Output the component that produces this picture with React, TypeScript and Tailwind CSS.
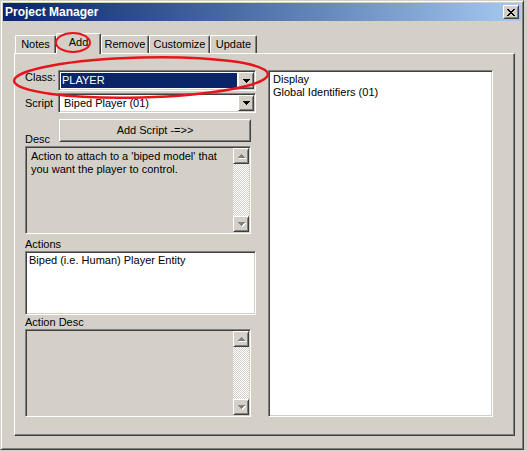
import React from 'react';

const sunken =
  'border border-t-[#808080] border-l-[#808080] border-b-white border-r-white shadow-[inset_1px_1px_0_#404040,inset_-1px_-1px_0_#d4d0c8]';
const raised =
  'border border-t-white border-l-white border-b-[#404040] border-r-[#404040] shadow-[inset_1px_1px_0_#d4d0c8,inset_-1px_-1px_0_#808080]';

function Arrow({ up, color = '#000' }: { up?: boolean; color?: string }) {
  const d = up
    ? 'M3 0h1v1h1v1h1v1h1v1h-7v-1h1v-1h1v-1h1z'
    : 'M0 0h7v1h-1v1h-1v1h-1v1h-1v-1h-1v-1h-1v-1h-1z';
  return (
    <svg width="8" height="5" viewBox="0 0 8 5" shapeRendering="crispEdges">
      {color === '#808080' && <path d={d} fill="#fff" transform="translate(1 1)" />}
      <path d={d} fill={color} />
    </svg>
  );
}

function DropButton() {
  return (
    <div className={`${raised} w-[16px] h-full flex items-center justify-center bg-[#d4d0c8] pl-[1px] pt-[1px]`}>
      <Arrow />
    </div>
  );
}

function Combo({ value, selected }: { value: string; selected?: boolean }) {
  return (
    <div className={`${sunken} bg-white flex-1 h-full flex p-[1px]`}>
      <div className="flex-1 flex p-[1px]">
        {selected ? (
          <div className="flex-1 bg-[#0a246a] text-white flex items-center pl-[1px]">{value}</div>
        ) : (
          <div className="flex-1 flex items-center pl-[3px]">{value}</div>
        )}
      </div>
      <DropButton />
    </div>
  );
}

function ScrollBar() {
  return (
    <div className="w-[16px] h-full flex flex-col">
      <div className={`${raised} h-[16px] flex items-center justify-center bg-[#d4d0c8] pl-[1px] pt-[1px]`}>
        <Arrow up color="#808080" />
      </div>
      <div className="flex-1 bg-[repeating-conic-gradient(#ffffff_0%_25%,#d4d0c8_0%_50%)] [background-size:2px_2px]" />
      <div className={`${raised} h-[16px] flex items-center justify-center bg-[#d4d0c8] pl-[1px] pt-[1px]`}>
        <Arrow color="#808080" />
      </div>
    </div>
  );
}

function TextBox({ lines }: { lines: string[] }) {
  return (
    <div className={`${sunken} bg-[#d4d0c8] w-[226px] h-[88px] flex p-[1px]`}>
      <div className="flex-1 pl-[4px] pt-[2px]">
        {lines.map((l) => (
          <div key={l}>{l}</div>
        ))}
      </div>
      <ScrollBar />
    </div>
  );
}

const tabs = [
  { name: 'Notes', w: 'w-[41px]' },
  { name: 'Add', w: 'w-[45px]', active: true },
  { name: 'Remove', w: 'w-[48px]' },
  { name: 'Customize', w: 'w-[61px]' },
  { name: 'Update', w: 'w-[47px]' },
];

export default function App() {
  return (
    <div className="relative w-[527px] h-[451px] bg-[#d4d0c8] overflow-hidden font-['Liberation_Sans',Arial,sans-serif] text-[11px] leading-[13px] text-black">
      <div className="w-[524px] h-[450px] flex flex-col p-[2px] border border-t-[#d4d0c8] border-l-[#d4d0c8] border-r-[#404040] border-b-[#404040] shadow-[inset_1px_1px_0_#fff,inset_-1px_-1px_0_#808080]">
        {/* title bar */}
        <div className="h-[18px] flex items-center bg-linear-to-r from-[#0a246a] to-[#a6caf0] pl-[2px] pr-[2px]">
          <span className="flex-1 text-white font-bold text-[12px]">Project Manager</span>
          <div className={`${raised} w-[16px] h-[14px] bg-[#d4d0c8] flex items-center justify-center`}>
            <svg width="8" height="7" viewBox="0 0 8 7" shapeRendering="crispEdges">
              <path
                d="M0 0h2v1h1v1h2v-1h1v-1h2v1h-1v1h-1v1h-1v1h1v1h1v1h1v1h-2v-1h-1v-1h-2v1h-1v1h-2v-1h1v-1h1v-1h1v-1h-1v-1h-1v-1h-1z"
                fill="#000"
              />
            </svg>
          </div>
        </div>

        {/* tabs */}
        <div className="mt-[12px] ml-[12px] h-[20px] flex items-end">
          {tabs.map((t) =>
            t.active ? (
              <div
                key={t.name}
                className={`${t.w} h-[21px] -mb-[1px] relative z-10 bg-[#d4d0c8] border-t border-l border-t-white border-l-white border-r border-r-[#404040] shadow-[inset_-1px_0_0_#808080] rounded-t-[2px] text-center pt-[2px]`}
              >
                {t.name}
              </div>
            ) : (
              <div
                key={t.name}
                className={`${t.w} h-[18px] bg-[#d4d0c8] border-t border-l border-t-white border-l-white border-r border-r-[#404040] shadow-[inset_-1px_0_0_#808080] rounded-t-[2px] text-center pt-[2px]`}
              >
                {t.name}
              </div>
            )
          )}
        </div>

        {/* tab panel */}
        <div className="ml-[11px] w-[501px] h-[383px] border border-t-white border-l-white border-r-[#404040] border-b-[#404040] shadow-[inset_-1px_-1px_0_#808080] pl-[10px] pt-[16px] flex gap-[12px]">
          <div className="w-[231px] flex flex-col">
            <div className="h-[21px] flex">
              <span className="w-[33px] pt-[1px]">Class:</span>
              <Combo value="PLAYER" selected />
            </div>
            <div className="h-[20px] mt-[2px] flex">
              <span className="w-[33px] pt-[4px]">Script</span>
              <Combo value="Biped Player (01)" />
            </div>
            <div className="h-[23px] mt-[6px] flex items-end">
              <span className="w-[34px] -mb-[4px]">Desc</span>
              <div className={`${raised} w-[192px] h-full bg-[#d4d0c8] flex items-center justify-center`}>
                Add Script -=&gt;&gt;
              </div>
            </div>
            <div className="mt-[4px]">
              <TextBox
                lines={["Action to attach to a 'biped model' that", 'you want the player to control.']}
              />
            </div>
            <div className="mt-[4px] h-[13px]">Actions</div>
            <div className={`${sunken} bg-white w-[231px] h-[64px] pl-[3px] pt-[2px]`}>
              Biped (i.e. Human) Player Entity
            </div>
            <div className="mt-[1px] h-[13px]">Action Desc</div>
            <TextBox lines={[]} />
          </div>

          <div className={`${sunken} bg-white w-[225px] h-[347px] pl-[4px] pt-[2px]`}>
            <div>Display</div>
            <div>Global Identifiers (01)</div>
          </div>
        </div>
      </div>

      {/* red annotation circles */}
      <svg className="absolute inset-0 z-20 pointer-events-none" width="527" height="451">
        <ellipse cx="73" cy="42.5" rx="17" ry="9.5" fill="none" stroke="#e8141b" strokeWidth="2" />
        <ellipse
          cx="141"
          cy="77.5"
          rx="127"
          ry="20"
          fill="none"
          stroke="#e8141b"
          strokeWidth="2.5"
          transform="rotate(-1.5 141 77.5)"
        />
      </svg>
    </div>
  );
}
